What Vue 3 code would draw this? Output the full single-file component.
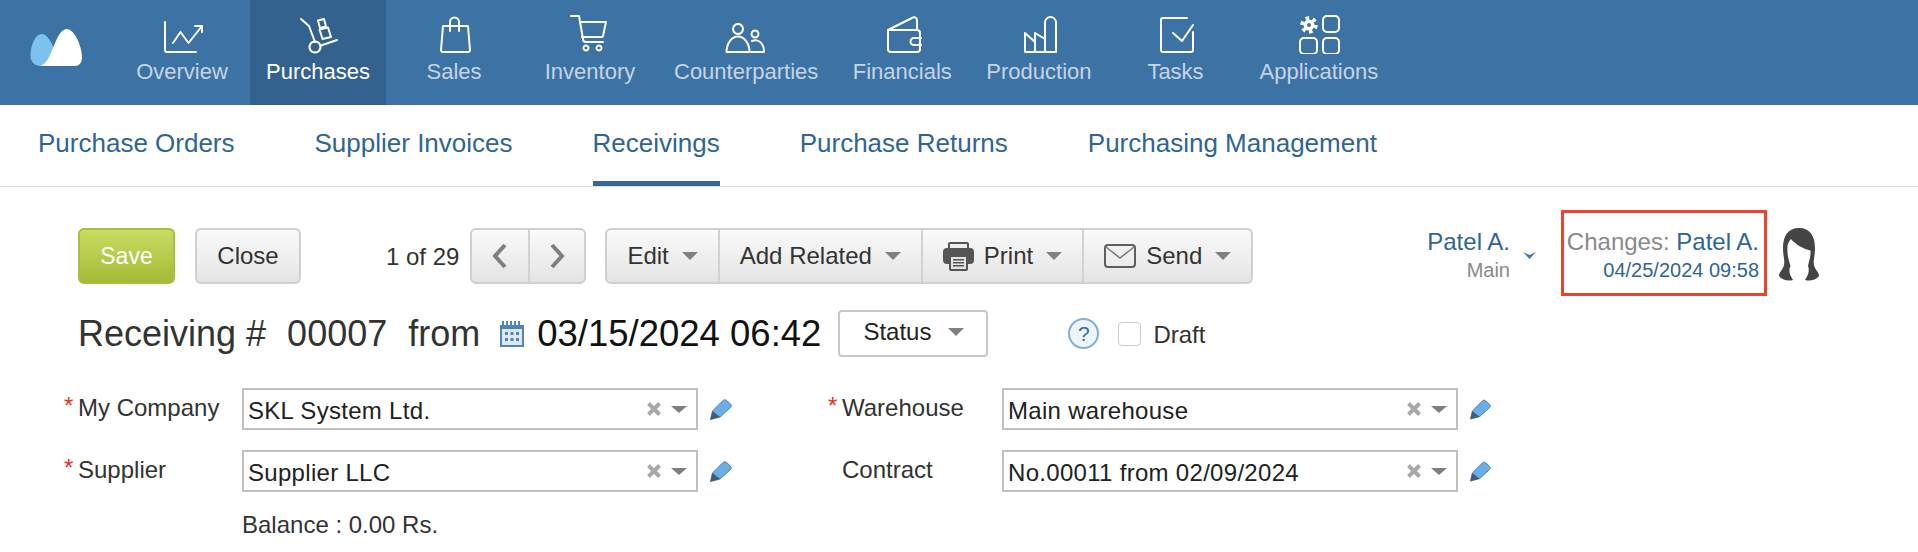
<template>
  <div class="page">
    <header class="topnav">
      <div class="logo">
        <svg width="52" height="37" viewBox="0 0 52 37">
          <path fill="#7dc2ee" d="M10.700 37C5 37 .5 33 .5 27 .5 17 5 5 11.700 5 17 5 21 13 24 19c-4 9-8 16-13.300 18z" />
          <path fill="#fff" d="M10 37c7-2 10-11 13-18C27 10 30 0 37 0c7 0 15 17 15 28 0 6-3 9-7 9z" />
        </svg>
      </div>
      <a
        v-for="item in navItems"
        :key="item.label"
        :class="['nav-item', { active: item.active }]"
      >
        <svg class="nav-icon" width="44" height="41" viewBox="0 0 44 41">
          <path v-for="d in item.paths" :key="d" :d="d" />
          <g v-if="item.gear" stroke-linecap="butt">
            <circle cx="12" cy="12" r="7" stroke-width="3.500" stroke-dasharray="3.600 3.730" />
            <circle cx="12" cy="12" r="3.750" stroke-width="3.500" />
          </g>
        </svg>
        <span class="nav-label">{{ item.label }}</span>
      </a>
    </header>

    <nav class="subnav">
      <a
        v-for="tab in tabs"
        :key="tab"
        :class="['tab', { current: tab === 'Receivings' }]"
      >{{ tab }}</a>
    </nav>

    <main class="content">
      <div class="toolbar">
        <button class="btn save">Save</button>
        <button class="btn close">Close</button>
        <span class="pager-text">1 of 29</span>
        <div class="btn-group pager">
          <button class="btn-seg arrow">
            <svg width="16" height="26" viewBox="0 0 16 26"><path d="M13 2 3 13l10 11" /></svg>
          </button>
          <button class="btn-seg arrow">
            <svg width="16" height="26" viewBox="0 0 16 26"><path d="m3 2 10 11L3 24" /></svg>
          </button>
        </div>
        <div class="btn-group actions">
          <button class="btn-seg">Edit<i class="caret"></i></button>
          <button class="btn-seg">Add Related<i class="caret"></i></button>
          <button class="btn-seg">
            <svg class="seg-icon" width="31" height="29" viewBox="0 0 31 29">
              <rect x="6" y="1" width="19" height="8" rx="1" fill="#eee" stroke="#555" stroke-width="2" />
              <rect y="6" width="31" height="16" rx="4" fill="#555" />
              <rect x="7" y="14" width="17" height="14" rx="1" fill="#e4e4e4" stroke="#555" stroke-width="2" />
              <path fill="#555" d="M10 17h11v1.500H10zM10 20h11v1.500H10zM10 23h11v1.500H10z" />
            </svg>
            Print<i class="caret"></i>
          </button>
          <button class="btn-seg">
            <svg class="seg-icon" width="32" height="24" viewBox="0 0 32 24">
              <rect x="1" y="1" width="30" height="22" rx="3" fill="none" stroke="#5f5f5f" stroke-width="2" />
              <path d="m2 3 14 11L30 3" fill="none" stroke="#777" stroke-width="1.500" />
            </svg>
            Send<i class="caret"></i>
          </button>
        </div>

        <div class="owner">
          <div class="owner-name">Patel A.</div>
          <div class="owner-dept">Main</div>
        </div>
        <svg class="owner-chevron" width="13" height="7" viewBox="0 0 13 7"><path d="M0 0l6.500 3L13 0 6.500 7z" /></svg>
        <div class="changes">
          <div><span class="muted">Changes:</span> Patel A.</div>
          <div class="changes-date">04/25/2024 09:58</div>
        </div>
        <svg class="avatar" width="40" height="54" viewBox="0 0 40 54">
          <path fill="#444" d="M20 0c11 0 16 8 16 20 0 8-2 12-1 17 1 5 5 7 5 11-4 5-10 5-14 4 3-5 5-9 3-14 1-5 3-10 2.500-15.500C25 21 17 17 12 11c-3 3-4 7-3.500 12 0 6 1.500 10 3 15-2.500 5-.5 9 2.500 14-4 1-10 1-14-4 0-4 4-6 5-11 1-5-1-9-1-17C4 8 9 0 20 0z" />
        </svg>
      </div>

      <div class="title-row">
        <h1 class="title">
          <span>Receiving #</span>
          <span>00007</span>
          <span>from</span>
        </h1>
        <svg class="calendar" width="24" height="26" viewBox="0 0 24 26">
          <path fill="#4f86b5" d="M0 4h24v22H0z" />
          <path fill="#4f86b5" d="M2 0h2v4H2zM6 0h2v4H6zM10 0h2v4h-2zM14 0h2v4h-2zM18 0h2v4h-2z" />
          <path fill="#dce8f2" d="M2 8h20v16H2z" />
          <path fill="#4f86b5" d="M5 11h3v3H5zM10.500 11h3v3h-3zM16 11h3v3h-3zM5 17h3v3H5zM10.500 17h3v3h-3zM16 17h3v3h-3z" />
        </svg>
        <span class="doc-date">03/15/2024 06:42</span>
        <button class="status">Status<i class="caret"></i></button>
        <span class="help">?</span>
        <span class="checkbox"></span>
        <span class="draft">Draft</span>
      </div>

      <div class="form">
        <template v-for="field in fields" :key="field.label">
          <label :class="['field-label', { required: field.required }]">{{ field.label }}</label>
          <div class="select">
            <span class="select-value">{{ field.value }}</span>
            <svg class="clear" width="14" height="14" viewBox="0 0 14 14"><path d="m1.500 1.500 11 11M12.500 1.500l-11 11" /></svg>
            <i class="caret"></i>
          </div>
          <div class="pencil-cell">
            <svg width="22" height="21" viewBox="0 0 22 21">
              <path fill="#69aee8" stroke="#5b7c9b" d="M13 1.500c1-1 2.500-1 3.500 0l4 3.500c1 1 1 2.500 0 3.500L10 18 .5 20.500 2.500 12z" />
              <path fill="#3e5c78" d="M.5 20.500 2.500 12l7.500 6z" />
            </svg>
          </div>
        </template>
        <div class="balance">Balance : 0.00 Rs.</div>
      </div>
    </main>
  </div>
</template>

<script setup>
const navItems = [
  {
    label: 'Overview',
    paths: [
      'M5 9v28a2 2 0 0 0 2 2h29',
      'M13 30l7.500-11L28.500 30 42 13',
      'M35 13h7v6'
    ]
  },
  {
    label: 'Purchases',
    active: true,
    paths: [
      'M5 6l8 7 6 16',
      'M25 32.500 41 27',
      'M19 28.500a5.500 5.500 0 1 0 .01 0z',
      'M22 7.500 28 6l2 7.500-6 1.500z',
      'M23.500 16.500 32 14.500 35 24l-8.500 2z'
    ]
  },
  {
    label: 'Sales',
    paths: [
      'M11 13h25l2 24a2 2 0 0 1-2 2H11a2 2 0 0 1-2-2z',
      'M18 18V9a4.500 4.500 0 0 1 9 0v9'
    ]
  },
  {
    label: 'Inventory',
    paths: [
      'M3 3h8l4 23a3 3 0 0 0 3 3h17',
      'M12 9h26l-3 14a1 1 0 0 1-1 1H14',
      'M18 32.500a2.500 2.500 0 1 0 .01 0z',
      'M31 32.500a2.500 2.500 0 1 0 .01 0z'
    ]
  },
  {
    label: 'Counterparties',
    paths: [
      'M14 11a5 5 0 1 0 .01 0z',
      'M2.500 39a11.500 15.500 0 0 1 23 0z',
      'M31 17.500a3.500 3.500 0 1 0 .01 0z',
      'M28 28c7-3 12 3 12 11H27'
    ]
  },
  {
    label: 'Financials',
    paths: [
      'M8 17h29a3 3 0 0 1 3 3v16a3 3 0 0 1-3 3H11a3 3 0 0 1-3-3z',
      'M8 17 32 5a3 3 0 0 1 5 2v10',
      'M41 25h-7a3.500 3.500 0 0 0 0 7h7'
    ]
  },
  {
    label: 'Production',
    paths: [
      'M8 39V20l10 9v-9l10 6V9.500a5.500 5.500 0 0 1 11 0V39z',
      'M18 29v10',
      'M28 26v13'
    ]
  },
  {
    label: 'Tasks',
    paths: [
      'M33 5H9a2 2 0 0 0-2 2v30a2 2 0 0 0 2 2h28a2 2 0 0 0 2-2V19',
      'M19 20l9 8 11-16'
    ]
  },
  {
    label: 'Applications',
    gear: true,
    paths: [
      'M30 3h8a4 4 0 0 1 4 4v8a4 4 0 0 1-4 4h-8a4 4 0 0 1-4-4V7a4 4 0 0 1 4-4z',
      'M7 25h9a4 4 0 0 1 4 4v8a4 4 0 0 1-4 4H7a4 4 0 0 1-4-4v-8a4 4 0 0 1 4-4z',
      'M30 25h8a4 4 0 0 1 4 4v8a4 4 0 0 1-4 4h-8a4 4 0 0 1-4-4v-8a4 4 0 0 1 4-4z'
    ]
  }
]

const tabs = [
  'Purchase Orders',
  'Supplier Invoices',
  'Receivings',
  'Purchase Returns',
  'Purchasing Management'
]

const fields = [
  { label: 'My Company', value: 'SKL System Ltd.', required: true },
  { label: 'Warehouse', value: 'Main warehouse', required: true },
  { label: 'Supplier', value: 'Supplier LLC', required: true },
  { label: 'Contract', value: 'No.00011 from 02/09/2024', required: false }
]
</script>

<style>
html,
body {
  margin: 0;
  background: #fff;
}
</style>

<style scoped>
.page {
  width: 1918px;
  height: 552px;
  overflow: hidden;
  font-family: "Liberation Sans", Arial, sans-serif;
  color: #333;
}

/* top bar */
.topnav {
  display: flex;
  height: 105px;
  background: #3d72a4;
}

.logo {
  width: 84px;
  padding: 29px 0 0 30px;
}

.nav-item {
  display: flex;
  flex-direction: column;
  align-items: center;
  box-sizing: border-box;
  min-width: 136px;
  padding: 13px 16px 0;
}

.nav-item.active {
  background: #33628e;
}

.nav-icon {
  fill: none;
  stroke: #fff;
  stroke-width: 2;
  stroke-linejoin: round;
  stroke-linecap: round;
}

.nav-label {
  margin-top: 6px;
  font-size: 22px;
  line-height: 24px;
  color: #c4d5e6;
}

.nav-item.active .nav-label {
  color: #fff;
}

/* tabs */
.subnav {
  display: flex;
  gap: 80px;
  height: 81px;
  padding-left: 38px;
  border-bottom: 1px solid #e0e0e0;
}

.tab {
  box-sizing: border-box;
  height: 81px;
  padding-top: 22px;
  font-size: 26px;
  line-height: 32px;
  color: #2f6595;
}

.tab.current {
  border-bottom: 5px solid #34689a;
}

/* toolbar */
.content {
  padding: 23px 99px 0 78px;
}

.toolbar {
  display: flex;
  align-items: flex-start;
  height: 86px;
}

.btn {
  box-sizing: border-box;
  height: 56px;
  margin-top: 18px;
  font: 24px "Liberation Sans", Arial, sans-serif;
  color: #333;
  border: 2px solid #cfcfcf;
  border-radius: 6px;
  background: linear-gradient(#fafafa, #e4e4e4);
}

.save {
  width: 97px;
  font-size: 23px;
  color: #fff;
  border-color: #a9bd3f;
  background: linear-gradient(#c9dc62, #a6ba36);
}

.close {
  width: 106px;
  margin-left: 20px;
}

.pager-text {
  margin: 33px 11px 0 85px;
  font-size: 24px;
  line-height: 28px;
}

.btn-group {
  display: flex;
  box-sizing: border-box;
  height: 56px;
  margin-top: 18px;
  border: 2px solid #cfcfcf;
  border-radius: 6px;
  background: linear-gradient(#fafafa, #e4e4e4);
}

.btn-seg {
  display: flex;
  align-items: center;
  padding: 0 20px;
  font: 24px "Liberation Sans", Arial, sans-serif;
  color: #333;
  border: 0;
  border-left: 2px solid #d2d2d2;
  background: none;
}

.btn-seg:first-child {
  border-left: 0;
}

.arrow {
  justify-content: center;
  width: 56px;
  padding: 0;
}

.arrow svg {
  fill: none;
  stroke: #7f7f7f;
  stroke-width: 4;
}

.actions {
  margin-left: 19px;
}

.seg-icon {
  margin-right: 10px;
}

.caret {
  display: inline-block;
  flex: none;
  width: 0;
  height: 0;
  margin-left: 13px;
  border-top: 8px solid #808080;
  border-left: 8px solid transparent;
  border-right: 8px solid transparent;
}

.owner {
  margin: 18px 0 0 auto;
  text-align: right;
}

.owner-name {
  font-size: 24px;
  line-height: 28px;
  color: #2f6595;
}

.owner-dept {
  font-size: 20px;
  line-height: 28px;
  color: #8a8a8a;
}

.owner-chevron {
  margin: 42px 25px 0 13px;
  fill: #3a78b0;
}

.changes {
  box-sizing: border-box;
  width: 206px;
  height: 86px;
  padding: 15px 5px 0 0;
  border: 3px solid #e8452c;
  font-size: 24px;
  line-height: 28px;
  text-align: right;
  white-space: nowrap;
  color: #2f6595;
}

.muted {
  color: #8a8a8a;
}

.changes-date {
  font-size: 20px;
}

.avatar {
  margin: 18px 0 0 12px;
}

/* title */
.title-row {
  display: flex;
  align-items: center;
  height: 47px;
  margin-top: 14px;
}

.title {
  display: flex;
  gap: 21px;
  margin: 0 10px 0 0;
  font-size: 36px;
  font-weight: 400;
  color: #333;
}

.calendar {
  margin: 0 13px 0 10px;
}

.doc-date {
  font-size: 36.500px;
  color: #111;
}

.status {
  display: flex;
  align-items: center;
  box-sizing: border-box;
  width: 150px;
  height: 47px;
  margin-left: 17px;
  padding: 0 0 3px 23px;
  font: 24px "Liberation Sans", Arial, sans-serif;
  color: #222;
  border: 2px solid #c8c8c8;
  border-radius: 4px;
  background: #fff;
}

.status .caret {
  margin-left: 17px;
}

.help {
  box-sizing: border-box;
  width: 31px;
  height: 31px;
  margin-left: 80px;
  font-size: 21px;
  line-height: 27px;
  text-align: center;
  color: #2f6fa8;
  border: 2px solid #7fb0d5;
  border-radius: 50%;
  background: #eef5fb;
}

.checkbox {
  box-sizing: border-box;
  width: 23px;
  height: 24px;
  margin-left: 19px;
  border: 1px solid #ccc;
  border-radius: 4px;
  background: #fff;
}

.draft {
  margin: 2px 0 0 12px;
  font-size: 24px;
}

/* form */
.form {
  display: grid;
  grid-template-columns: 164px 456px 144px 160px 456px 33px;
  grid-auto-rows: 42px;
  row-gap: 20px;
  margin-top: 31px;
}

.field-label {
  position: relative;
  font-size: 24px;
  line-height: 40px;
  color: #333;
}

.field-label.required::before {
  content: "*";
  position: absolute;
  left: -14px;
  top: -2px;
  color: #e8301c;
}

.select {
  display: flex;
  align-items: center;
  box-sizing: border-box;
  padding: 0 9px 0 4px;
  border: 2px solid #c0c0c0;
}

.select-value {
  flex: 1;
  padding-top: 3px;
  font-size: 24px;
  letter-spacing: .3px;
  color: #222;
}

.clear {
  fill: none;
  stroke: #a8a8a8;
  stroke-width: 4;
}

.select .caret {
  margin-left: 10px;
  border-top-width: 7px;
}

.pencil-cell {
  display: flex;
  align-items: center;
  padding-left: 12px;
}

.balance {
  grid-column: 2 / 3;
  margin-top: -3px;
  font-size: 24px;
  line-height: 32px;
  color: #333;
}
</style>
